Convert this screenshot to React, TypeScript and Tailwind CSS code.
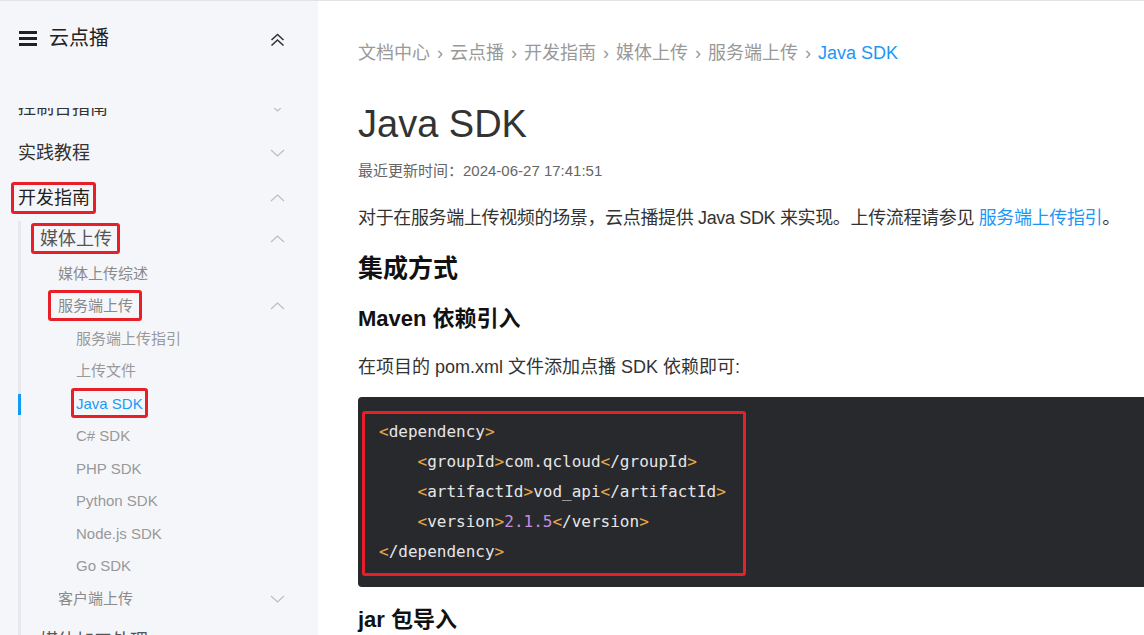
import type { ReactNode } from 'react'

const RED = 'border-[3px] border-[#e61f29] rounded-[3px]'

function ChevronDown() {
  return (
    <svg width="15" height="8" viewBox="0 0 15 8" fill="none" stroke="#b9bcc2" strokeWidth="1.1">
      <path d="M1 1 L7.5 7 L14 1" />
    </svg>
  )
}

function ChevronUp() {
  return (
    <svg width="15" height="8" viewBox="0 0 15 8" fill="none" stroke="#b9bcc2" strokeWidth="1.1">
      <path d="M1 7 L7.5 1 L14 7" />
    </svg>
  )
}

function Row({
  h,
  pl,
  text,
  chevron,
  children,
}: {
  h: string
  pl: string
  text: string
  chevron?: 'up' | 'down'
  children?: ReactNode
}) {
  return (
    <div className={`relative flex items-center justify-between pr-[33px] ${h} ${pl} ${text}`}>
      {children}
      {chevron === 'up' && <ChevronUp />}
      {chevron === 'down' && <ChevronDown />}
    </div>
  )
}

function Sidebar() {
  return (
    <aside className="w-[318px] shrink-0 bg-[#f5f6fa] flex flex-col h-full">
      {/* header */}
      <div className="h-[107px] shrink-0 flex items-start justify-between pl-[19px] pr-[33px] pt-[25px]">
        <div className="flex items-center h-[24px] gap-[12px]">
          <div className="flex flex-col gap-[3px] w-[18px]">
            <div className="h-[3px] bg-[#222]" />
            <div className="h-[3px] bg-[#222]" />
            <div className="h-[3px] bg-[#222]" />
          </div>
          <span className="text-[20px] text-[#222] leading-[24px]">云点播</span>
        </div>
        <svg width="15" height="14" viewBox="0 0 15 14" fill="none" stroke="#333" strokeWidth="1.6" className="mt-[7px]">
          <path d="M1.5 7 L7.5 1.5 L13.5 7" />
          <path d="M1.5 12.5 L7.5 7 L13.5 12.5" />
        </svg>
      </div>

      {/* tree */}
      <div className="flex-1 overflow-hidden">
        <div className="mt-[-22.5px]">
          <Row h="h-[45px]" pl="pl-[18px]" text="text-[18px] text-[#333]" chevron="down">
            <span className="leading-[24px]">控制台指南</span>
          </Row>
          <Row h="h-[45px]" pl="pl-[18px]" text="text-[18px] text-[#333]" chevron="down">
            <span className="leading-[24px]">实践教程</span>
          </Row>
          <Row h="h-[45px]" pl="pl-[18px]" text="text-[18px] text-[#222]" chevron="up">
            <span className="relative leading-[24px]">
              开发指南
              <span className={`absolute -top-[4px] -bottom-[4px] -left-[7px] -right-[6px] ${RED}`} />
            </span>
          </Row>

          <div className="ml-[18px] border-l-[3px] border-[#e6e8ee]">
            <Row h="h-[37px]" pl="pl-[19px]" text="text-[18px] text-[#555]" chevron="up">
              <span className="relative leading-[24px]">
                媒体上传
                <span className={`absolute -top-[4px] -bottom-[3px] -left-[9px] -right-[8px] ${RED}`} />
              </span>
            </Row>
            <Row h="h-[32.5px]" pl="pl-[37px]" text="text-[15px] text-[#8a8a8a]">
              <span className="leading-[20px]">媒体上传综述</span>
            </Row>
            <Row h="h-[32.5px]" pl="pl-[37px]" text="text-[15px] text-[#8a8a8a]" chevron="up">
              <span className="relative leading-[20px]">
                服务端上传
                <span className={`absolute -top-[6px] -bottom-[5px] -left-[10px] -right-[9px] ${RED}`} />
              </span>
            </Row>
            <Row h="h-[32.5px]" pl="pl-[55px]" text="text-[15px] text-[#999]">
              <span className="leading-[20px]">服务端上传指引</span>
            </Row>
            <Row h="h-[32.5px]" pl="pl-[55px]" text="text-[15px] text-[#999]">
              <span className="leading-[20px]">上传文件</span>
            </Row>
            <Row h="h-[32.5px]" pl="pl-[55px]" text="text-[15px] text-[#1a9bf7]">
              <span className="absolute left-[-3px] top-[6.5px] w-[3px] h-[21px] bg-[#0e9cf7]" />
              <span className="relative leading-[20px]">
                Java SDK
                <span className={`absolute -top-[6px] -bottom-[4px] -left-[5px] -right-[5px] ${RED}`} />
              </span>
            </Row>
            {['C# SDK', 'PHP SDK', 'Python SDK', 'Node.js SDK', 'Go SDK'].map((s) => (
              <Row key={s} h="h-[32.5px]" pl="pl-[55px]" text="text-[15px] text-[#999]">
                <span className="leading-[20px]">{s}</span>
              </Row>
            ))}
            <Row h="h-[32.5px]" pl="pl-[37px]" text="text-[15px] text-[#8a8a8a]" chevron="down">
              <span className="leading-[20px]">客户端上传</span>
            </Row>
            <Row h="h-[52px]" pl="pl-[19px]" text="text-[18px] text-[#555]" chevron="down">
              <span className="leading-[24px]">媒体加工处理</span>
            </Row>
          </div>
        </div>
      </div>
    </aside>
  )
}

const O = 'text-[#e5a546]'
const W = 'text-[#e6e6e6]'

function Tag({ name, close }: { name: string; close?: boolean }) {
  return (
    <>
      <span className={O}>{'<'}</span>
      {close && <span className={W}>/</span>}
      <span className={W}>{name}</span>
      <span className={O}>{'>'}</span>
    </>
  )
}

function CodeBlock() {
  return (
    <div className="relative mt-[16px] h-[190px] w-full bg-[#28292d] rounded-l-[4px] pt-[20px] pl-[21px] [font-family:'DejaVu_Sans_Mono',monospace] text-[16px] leading-[30px] whitespace-pre">
      <div>
        <Tag name="dependency" />
      </div>
      <div>
        {'    '}
        <Tag name="groupId" />
        <span className={W}>com.qcloud</span>
        <Tag name="groupId" close />
      </div>
      <div>
        {'    '}
        <Tag name="artifactId" />
        <span className={W}>vod_api</span>
        <Tag name="artifactId" close />
      </div>
      <div>
        {'    '}
        <Tag name="version" />
        <span className="text-[#c38fdf]">2.1.5</span>
        <Tag name="version" close />
      </div>
      <div>
        <Tag name="dependency" close />
      </div>
      <div className={`absolute left-[4px] top-[14px] w-[384px] h-[165px] ${RED}`} />
    </div>
  )
}

function Main() {
  const crumbs = ['文档中心', '云点播', '开发指南', '媒体上传', '服务端上传']
  return (
    <main className="flex-1 min-w-0 bg-white pl-[40px] pt-[40px] flex flex-col overflow-hidden">
      <div className="flex items-center text-[18px] leading-[24px] text-[#999] whitespace-nowrap">
        {crumbs.map((c) => (
          <span key={c} className="flex items-center">
            {c}
            <span className="mx-[7px] text-[#999]">›</span>
          </span>
        ))}
        <span className="text-[#1c97f5]">Java SDK</span>
      </div>

      <h1 className="mt-[35px] text-[38px] leading-[48px] text-[#333] font-normal">Java SDK</h1>

      <div className="mt-[13px] text-[15px] leading-[20px] text-[#666]">最近更新时间：2024-06-27 17:41:51</div>

      <p className="mt-[23px] text-[18px] leading-[28px] text-[#333] whitespace-nowrap tracking-[-0.35px]">
        对于在服务端上传视频的场景，云点播提供 Java SDK 来实现。上传流程请参见{' '}
        <span className="text-[#1c97f5]">服务端上传指引</span>。
      </p>

      <h2 className="mt-[19px] text-[25px] leading-[34px] font-bold text-[#111]">集成方式</h2>

      <h3 className="mt-[19px] text-[22px] leading-[30px] font-bold text-[#111]">Maven 依赖引入</h3>

      <p className="mt-[19px] text-[18px] leading-[28px] text-[#333]">在项目的 pom.xml 文件添加点播 SDK 依赖即可:</p>

      <CodeBlock />

      <h3 className="mt-[18px] text-[22px] leading-[30px] font-bold text-[#111]">jar 包导入</h3>
    </main>
  )
}

export default function App() {
  return (
    <div className="w-full h-[635px] overflow-hidden border-t border-[#e3e3e3] flex [font-family:'Liberation_Sans','Noto_Sans_CJK_SC',sans-serif]">
      <Sidebar />
      <Main />
    </div>
  )
}
